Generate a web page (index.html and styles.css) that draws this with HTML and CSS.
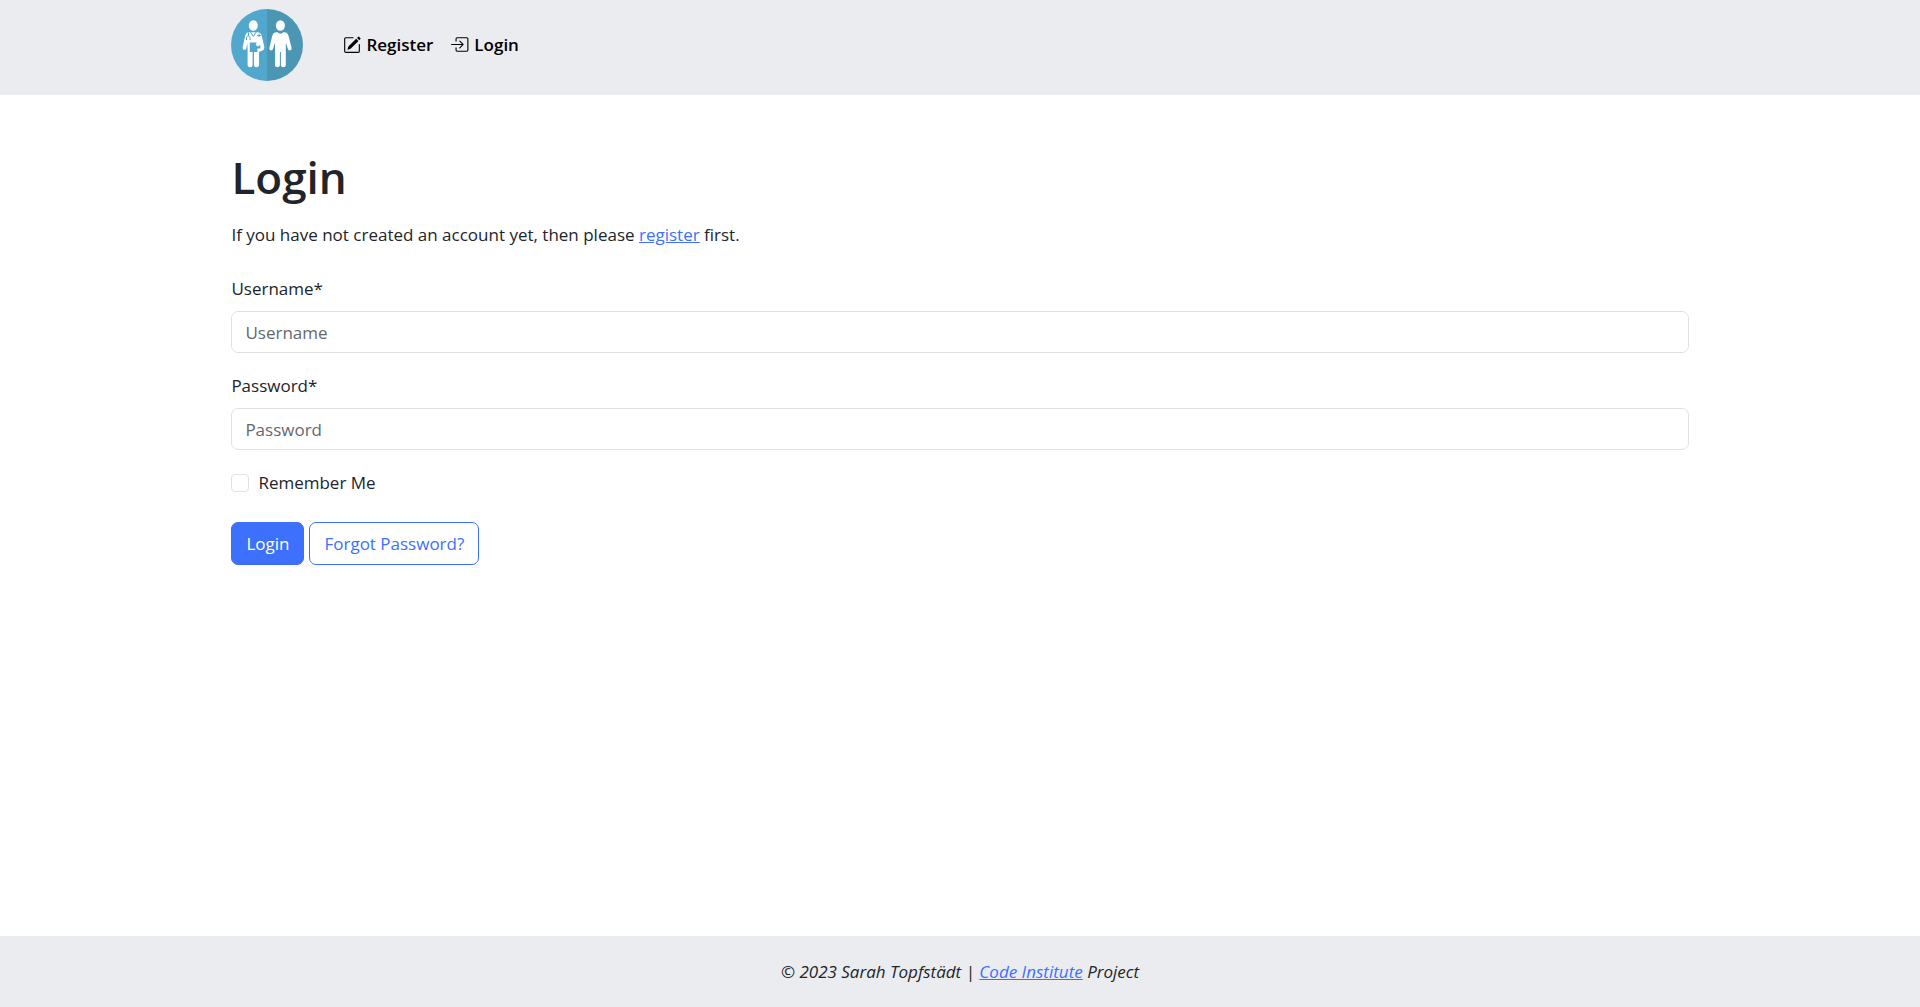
FILE: index.html
```html
<!DOCTYPE html>
<html lang="en">
<head>
  <meta charset="utf-8">
  <meta name="viewport" content="width=device-width, initial-scale=1">
  <title>Login</title>
  <link rel="stylesheet" href="styles.css">
</head>
<body>
  <header class="site-header">
    <a class="brand" href="#" aria-label="Home">
      <svg class="logo" viewBox="0 0 72 72" aria-hidden="true">
        <path fill="#52a8cc" d="M36 0a36 36 0 0 0 0 72z"/>
        <path fill="#4b96b3" d="M36 0a36 36 0 0 1 0 72z"/>
        <g fill="#fff">
          <ellipse cx="22.300" cy="16.500" rx="4.500" ry="5.300"/>
          <path d="M18.500 23.300h7.600c3 0 4 1.200 4.800 4.200l2.400 10.500c.3 2.500-1.500 4-5.300 4.800V56c0 3-4.800 3-5 0V43h-1.400v13c-.2 3-4.800 3-5 0V40l-.4-5.500-1 5c-.8 2.500-4 1.500-3.500-1.300l2.300-10.700c.7-3 1.700-4.200 4.500-4.200z"/>
          <ellipse cx="49.400" cy="16.500" rx="4.500" ry="5.300"/>
          <path d="M45.600 23.300h7.600c2.700 0 3.700 1.200 4.500 4.200l2.900 11.500c.4 2.600-2.900 3.400-3.700 1l-2.100-6.500V56c-.2 3-4.700 3-4.900 0V43h-1v13c-.2 3-4.700 3-4.900 0V33.500L42 40c-.8 2.400-4.100 1.600-3.700-1l2.800-11.500c.8-3 1.800-4.200 4.500-4.200z"/>
        </g>
        <path fill="#52a8cc" d="M18.800 33.500h7l-1.200 2.500 2.600 1.500 2-1.700.3 3.400-3.300.5.400 3.300h-7.800z"/>
        <path fill="none" stroke="#52a8cc" d="m19.500 23 2.800 4.500 2.900-4.500M17.500 23.500V27M15.500 31v-2.500c0-2 3.500-2 3.500 0V31M28 24.500v3.500m-2-1.500h4"/>
        <path fill="#4b96b3" d="M46.500 22.500h5.800c-1 3-4.800 3-5.800 0z"/>
      </svg>
    </a>
    <nav class="nav">
      <a class="nav-link" href="#">
        <svg class="icon" viewBox="0 0 16 16" aria-hidden="true"><path d="M15.502 1.940a.5.5 0 0 1 0 .706L14.459 3.690l-2-2L13.502.646a.5.5 0 0 1 .707 0l1.293 1.293zm-1.750 2.456-2-2L4.939 9.210a.5.5 0 0 0-.121.196l-.805 2.414a.25.25 0 0 0 .316.316l2.414-.805a.5.5 0 0 0 .196-.120l6.813-6.814z"/><path fill-rule="evenodd" d="M1 13.500A1.500 1.500 0 0 0 2.500 15h11a1.500 1.500 0 0 0 1.500-1.500v-6a.5.5 0 0 0-1 0v6a.5.5 0 0 1-.5.5h-11a.5.5 0 0 1-.5-.5v-11a.5.5 0 0 1 .5-.5H9a.5.5 0 0 0 0-1H2.500A1.500 1.500 0 0 0 1 2.500v11z"/></svg>
        Register
      </a>
      <a class="nav-link" href="#">
        <svg class="icon" viewBox="0 0 16 16" aria-hidden="true"><path fill="none" stroke="#000" stroke-linecap="round" stroke-linejoin="round" d="M4.500 4.500V2.500a1 1 0 0 1 1-1h8.500a1 1 0 0 1 1 1v10a1 1 0 0 1-1 1h-8.500a1 1 0 0 1-1-1V10.500M.5 7.500h10M7.800 4.500l3 3-3 3"/></svg>
        Login
      </a>
    </nav>
  </header>

  <main class="content">
    <h1 class="title">Login</h1>
    <p class="intro">If you have not created an account yet, then please <a class="link" href="#">register</a> first.</p>
    <form class="form">
      <div class="field">
        <label for="username">Username*</label>
        <input class="input" type="text" id="username" placeholder="Username" required>
      </div>
      <div class="field">
        <label for="password">Password*</label>
        <input class="input" type="password" id="password" placeholder="Password" required>
      </div>
      <div class="check">
        <input class="checkbox" type="checkbox" id="remember">
        <label for="remember">Remember Me</label>
      </div>
      <div class="actions">
        <button class="button button-primary" type="submit">Login</button>
        <button class="button" type="button">Forgot Password?</button>
      </div>
    </form>
  </main>

  <footer class="site-footer">
    <p class="credit">© 2023 Sarah Topfstädt | <a class="link" href="#">Code Institute</a> Project</p>
  </footer>
</body>
</html>
```
FILE: styles.css
```css
* {
  box-sizing: border-box;
}

body {
  --gutter: calc(12% + 1px);
  display: flex;
  flex-direction: column;
  min-height: 100vh;
  margin: 0;
  background: #fff;
  color: #212529;
  font-family: "Segoe UI", "Open Sans", "Noto Sans", sans-serif;
  font-size: 17px;
  line-height: 26px;
}

.site-header {
  display: flex;
  align-items: center;
  gap: 40px;
  padding: 9px var(--gutter) 14px;
  background: #ebecf0;
}

.brand,
.logo {
  display: block;
  width: 72px;
  height: 72px;
}

.nav {
  display: flex;
  gap: 18px;
}

.nav-link {
  display: flex;
  align-items: center;
  gap: 5px;
  color: #000;
  font-weight: 600;
  text-decoration: none;
}

.icon {
  width: 18px;
  height: 18px;
}

.content {
  flex: 1;
  padding: 56px var(--gutter);
}

.title {
  margin: 0 0 18px;
  font-size: 44px;
  font-weight: 600;
  line-height: 53px;
}

.intro {
  margin: 0 0 28px;
}

.link {
  color: #3d70fd;
}

.form {
  display: flex;
  flex-direction: column;
  gap: 20px;
}

.field {
  display: flex;
  flex-direction: column;
  gap: 9px;
}

.input {
  width: 100%;
  height: 42px;
  padding: 6px 13px;
  border: 1px solid #dee2e6;
  border-radius: 7px;
  background: #fff;
  color: inherit;
  font: inherit;
}

.input::placeholder {
  color: #64686c;
  opacity: 1;
}

.check {
  display: flex;
  align-items: center;
  gap: 9px;
}

.checkbox {
  appearance: none;
  width: 18px;
  height: 18px;
  margin: 0;
  border: 1px solid #dee2e6;
  border-radius: 4px;
}

.checkbox:checked {
  background: #3d70fd;
}

.actions {
  display: flex;
  gap: 5px;
  padding-top: 6px;
}

.button {
  height: 43px;
  padding: 0 14px;
  border: 1px solid #3d70fd;
  border-radius: 7px;
  background: #fff;
  color: #3d70fd;
  font: inherit;
}

.button-primary {
  background: #3d70fd;
  color: #fff;
}

.site-footer {
  padding: 23px var(--gutter) 22px;
  background: #ebecf0;
  font-style: italic;
  text-align: center;
}

.credit {
  margin: 0;
}
```
